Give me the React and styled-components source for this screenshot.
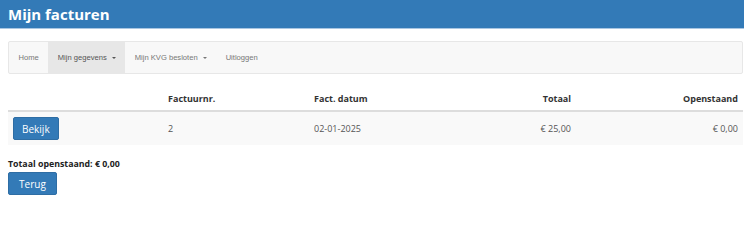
import React from 'react';
import styled, { createGlobalStyle } from 'styled-components';

const Global = createGlobalStyle`
  body {
    margin: 0;
    background: #fff;
    font-family: "Open Sans", "Liberation Sans", sans-serif;
    color: #333;
  }
`

const Header = styled.div`
  height: 28px;
  background: #337ab7;
  border-bottom: 1px solid #a9c6e2;
  display: flex;
  align-items: center;
  padding-left: 8px;
`

const Title = styled.h1`
  margin: 0;
  font-size: 15px;
  font-weight: 700;
  color: #fff;
`

const Page = styled.div`
  padding: 12px 1px 0 8px;
`

const Nav = styled.div`
  height: 31px;
  display: flex;
  background: #f8f8f8;
  border: 1px solid #e7e7e7;
  border-radius: 2px;
`

const NavItem = styled.div`
  display: flex;
  align-items: center;
  gap: 4px;
  padding: 0 9.5px;
  font-family: "Liberation Sans", Arial, sans-serif;
  font-size: 7.6px;
  color: ${p => (p.$active ? '#555' : '#777')};
  background: ${p => (p.$active ? '#e7e7e7' : 'transparent')};
`

const Caret = styled.span`
  width: 0;
  height: 0;
  border-left: 2.5px solid transparent;
  border-right: 2.5px solid transparent;
  border-top: 2.5px solid currentColor;
  margin-left: 1px;
`

const Table = styled.div`
  margin-top: 12px;
  font-size: 9px;
`

const Row = styled.div`
  display: grid;
  grid-template-columns: 155px 146px 140px 127px 1fr;
  align-items: center;
  height: ${p => (p.$head ? '24px' : '33px')};
  background: ${p => (p.$head ? 'transparent' : '#f9f9f9')};
  border-bottom: ${p => (p.$head ? '2px solid #ddd' : 'none')};
`

const Cell = styled.div`
  padding: 0 5px;
  text-align: ${p => (p.$right ? 'right' : 'left')};
  font-weight: ${p => (p.$bold ? 700 : 400)};
  color: ${p => (p.$bold ? '#333' : '#555')};
`

const Button = styled.button`
  height: 23px;
  padding: 0 8px;
  border: 1px solid #2e6da4;
  border-radius: 2px;
  background: #337ab7;
  color: #fff;
  font-family: "Open Sans", sans-serif;
  font-size: 10px;
  cursor: pointer;
`

const Total = styled.div`
  margin-top: 14px;
  font-size: 8.8px;
  font-weight: 700;
  color: #222;
  line-height: 11px;
`

const BackButton = styled(Button)`
  margin-top: 2px;
  width: 49px;
`

export default function App() {
  return (
    <>
      <Global />
      <Header>
        <Title>Mijn facturen</Title>
      </Header>
      <Page>
        <Nav>
          <NavItem>Home</NavItem>
          <NavItem $active>Mijn gegevens <Caret /></NavItem>
          <NavItem>Mijn KVG besloten <Caret /></NavItem>
          <NavItem>Uitloggen</NavItem>
        </Nav>
        <Table>
          <Row $head>
            <Cell />
            <Cell $bold>Factuurnr.</Cell>
            <Cell $bold>Fact. datum</Cell>
            <Cell $bold $right>Totaal</Cell>
            <Cell $bold $right>Openstaand</Cell>
          </Row>
          <Row>
            <Cell><Button>Bekijk</Button></Cell>
            <Cell>2</Cell>
            <Cell>02-01-2025</Cell>
            <Cell $right>€ 25,00</Cell>
            <Cell $right>€ 0,00</Cell>
          </Row>
        </Table>
        <Total>Totaal openstaand: € 0,00</Total>
        <BackButton>Terug</BackButton>
      </Page>
    </>
  )
}
